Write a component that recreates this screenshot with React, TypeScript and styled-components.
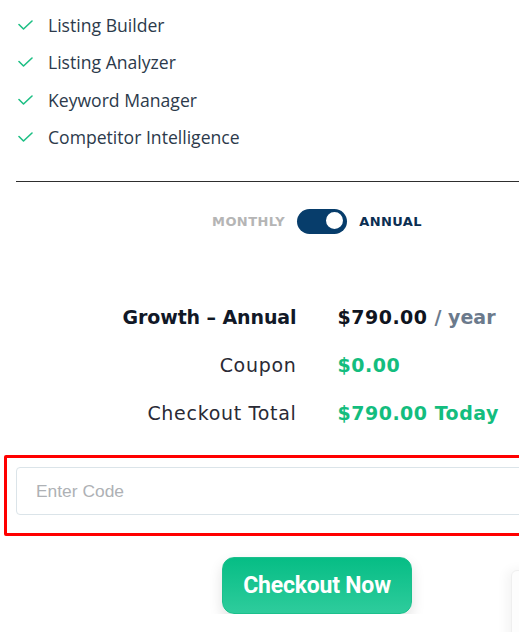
import React, { useState } from 'react';
import styled, { createGlobalStyle } from 'styled-components';

const GlobalStyle = createGlobalStyle`
  html, body {
    margin: 0;
    padding: 0;
    background: #fff;
    overflow: hidden;
  }
`;

const Page = styled.div`
  width: 634px;
  display: flex;
  flex-direction: column;
`;

const FeatureList = styled.ul`
  list-style: none;
  margin: 0;
  padding: 6px 0 0 18px;
  display: flex;
  flex-direction: column;
`;

const Feature = styled.li`
  display: flex;
  align-items: center;
  gap: 15px;
  height: 37.5px;
  font-family: "Open Sans", "Noto Sans", sans-serif;
  font-size: 17.6px;
  color: #2c3a4b;
`;

const Divider = styled.hr`
  margin: 25px 16px 0;
  border: none;
  border-top: 1px solid #2e2e2e;
`;

const ToggleRow = styled.div`
  display: flex;
  justify-content: center;
  align-items: center;
  gap: 12px;
  margin-top: 27px;
  font-family: "DejaVu Sans", "Liberation Sans", sans-serif;
  font-size: 13px;
  font-weight: 700;
  letter-spacing: 0.4px;
`;

const PlanLabel = styled.span<{ $active?: boolean }>`
  color: ${(p) => (p.$active ? '#0b2e52' : '#b5b5b5')};
`;

const Switch = styled.button<{ $on: boolean }>`
  position: relative;
  width: 50px;
  height: 25px;
  padding: 0;
  border: none;
  border-radius: 13px;
  background: #073d6b;
  cursor: pointer;

  &::after {
    content: '';
    position: absolute;
    top: 1px;
    left: ${(p) => (p.$on ? '27px' : '2px')};
    width: 17px;
    height: 17px;
    border-radius: 50%;
    background: #fff;
    border: 2px solid #073d6b;
    box-sizing: content-box;
  }
`;

const Summary = styled.div`
  display: grid;
  grid-template-columns: 1fr 1fr;
  column-gap: 41px;
  margin-top: 59px;
  font-family: "DejaVu Sans", "Liberation Sans", sans-serif;
  font-size: 19px;
`;

const Label = styled.div<{ $strong?: boolean }>`
  text-align: right;
  height: 48px;
  line-height: 48px;
  color: ${(p) => (p.$strong ? '#111827' : '#2a2a35')};
  font-weight: ${(p) => (p.$strong ? 700 : 400)};
  letter-spacing: ${(p) => (p.$strong ? '-0.1px' : '0.7px')};
`;

const Value = styled.div<{ $green?: boolean }>`
  height: 48px;
  line-height: 48px;
  font-weight: 700;
  letter-spacing: 0.5px;
  color: ${(p) => (p.$green ? '#13bd7e' : '#0f1420')};
`;

const Period = styled.span`
  color: #6b7a8c;
  margin-left: 7px;
  letter-spacing: 0;
`;

const CodeBox = styled.div`
  margin: 18px 4px 0;
  padding: 9px 9px 18px;
  border: 3px solid #ff0000;
  border-radius: 2px;
`;

const CodeInput = styled.input`
  display: block;
  width: 100%;
  box-sizing: border-box;
  height: 48px;
  padding: 0 19px;
  border: 1px solid #dbe4e9;
  border-radius: 4px;
  font-family: "Liberation Sans", Arial, sans-serif;
  font-size: 17.4px;
  color: #333;
  outline: none;

  &::placeholder {
    color: #aeb1b5;
  }
`;

const ButtonRow = styled.div`
  display: flex;
  justify-content: center;
  margin-top: 21px;
`;

const CheckoutButton = styled.button`
  width: 190px;
  height: 57px;
  border: 1px solid #1cc08c;
  border-radius: 12px;
  background: linear-gradient(180deg, #06bd85 0%, #2ecc9c 100%);
  color: #fff;
  font-family: Roboto, "Liberation Sans", sans-serif;
  font-size: 23px;
  font-weight: 700;
  letter-spacing: -0.2px;
  box-shadow: 0 6px 14px rgba(0, 0, 0, 0.12);
  cursor: pointer;
`;

const SideCard = styled.div`
  position: fixed;
  left: 511px;
  top: 570px;
  width: 200px;
  height: 200px;
  background: #fdfdfd;
  border: 1px solid #efefef;
  border-radius: 6px;
  box-shadow: -4px 0 12px rgba(0, 0, 0, 0.05);
`;

const Check = () => (
  <svg width="15" height="10" viewBox="0 0 15 10" fill="none">
    <path d="M1 4.5 L5.5 9 L14 1" stroke="#1dbf84" strokeWidth="1.6" strokeLinecap="round" strokeLinejoin="round" />
  </svg>
);

const features = ['Listing Builder', 'Listing Analyzer', 'Keyword Manager', 'Competitor Intelligence'];

const App: React.FC = () => {
  const [annual, setAnnual] = useState(true);
  const [code, setCode] = useState('');

  return (
    <>
      <GlobalStyle />
      <Page>
        <FeatureList>
          {features.map((f) => (
            <Feature key={f}>
              <Check />
              {f}
            </Feature>
          ))}
        </FeatureList>

        <Divider />

        <ToggleRow>
          <PlanLabel $active={!annual}>MONTHLY</PlanLabel>
          <Switch $on={annual} onClick={() => setAnnual(!annual)} aria-label="Billing period" />
          <PlanLabel $active={annual}>ANNUAL</PlanLabel>
        </ToggleRow>

        <Summary>
          <Label $strong>Growth – Annual</Label>
          <Value>
            $790.00<Period>/ year</Period>
          </Value>
          <Label>Coupon</Label>
          <Value $green>$0.00</Value>
          <Label>Checkout Total</Label>
          <Value $green>$790.00 Today</Value>
        </Summary>

        <CodeBox>
          <CodeInput placeholder="Enter Code" value={code} onChange={(e) => setCode(e.target.value)} />
        </CodeBox>

        <ButtonRow>
          <CheckoutButton>Checkout Now</CheckoutButton>
        </ButtonRow>
      </Page>
      <SideCard />
    </>
  );
};

export default App;
